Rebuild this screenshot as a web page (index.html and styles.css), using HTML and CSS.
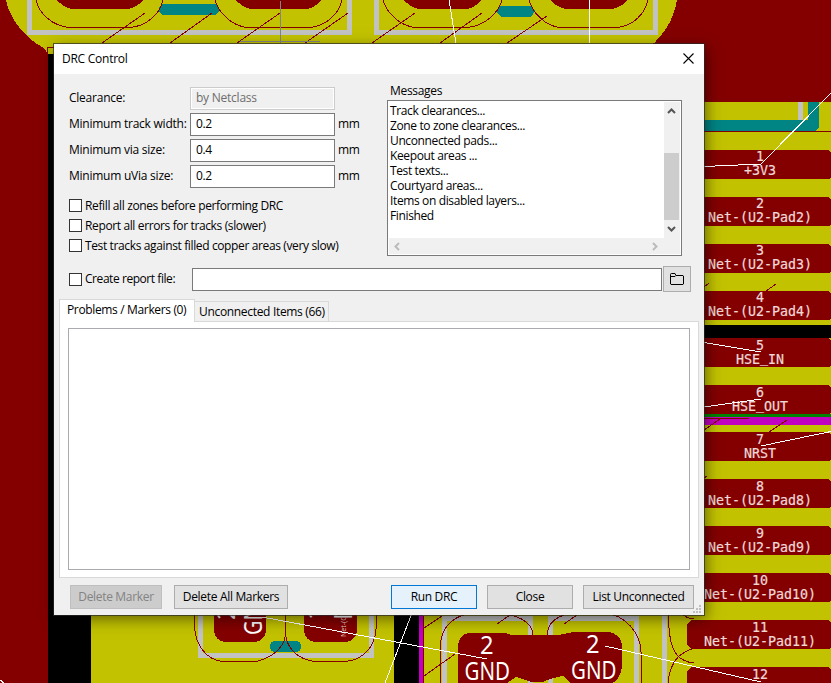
FILE: index.html
```html
<!DOCTYPE html>
<html lang="en">
<head>
<meta charset="utf-8">
<title>DRC Control</title>
<link rel="stylesheet" href="styles.css">
</head>
<body>
<svg class="board" width="831" height="683" viewBox="0 0 831 683" shape-rendering="crispEdges" aria-hidden="true">
  <rect class="cu" width="831" height="683"/>
  <path class="mask" d="M6 0C10 20 26 39 44 48L48 54H640C662 40 674 20 677 0Z"/>
  <path class="silk" d="M29.500 0V32.500H349.500V0M376.500 0V32.500H655.500V0"/>
  <path class="cu" d="M57 0Q63 7 71 9H128Q138 7 143 0ZM236 0Q242 7 250 9H307Q316 7 321 0ZM404 0Q410 7 418 9H467Q476 7 481 0ZM550 0Q557 7 565 9H612Q622 7 628 0Z"/>
  <path class="teal" d="M162 4H216L219 8V11L216 15H162L159 11V8ZM500 6H532L535 11L531 17H501L497 13V9Z"/>
  <path class="trace" d="M36 0C39 14 53 26 69 27.500H130C147 26 160 14 163 0M215 0C219 14 233 26 247 27.500H310C326 26 339 14 342 0M383 0C387 14 401 26 415 27.500H467C484 26 498 14 502 0M529 0C533 14 546 26 560 27.500H617C633 26 645 14 648 0M145 13L102 43M212 13L170 43M280 13L237 43M348 13L305 43M415 13L372 43M482 13L440 43M547 16L507 43M47.500 54V47.500H54"/>
  <path class="cross" d="M280.500 1V43M240 41.500H320"/>
  <path class="rat" d="M449 0L456 43M589.500 0V43"/>

  <rect class="void" x="48" y="54" width="8" height="629"/>
  <rect class="void" x="48" y="610" width="43" height="73"/>
  <rect class="mask" x="91" y="610" width="303" height="73"/>
  <rect class="void" x="394" y="610" width="25" height="73"/>
  <rect class="edge" x="419" y="610" width="4" height="73"/>
  <rect class="mask" x="423" y="610" width="408" height="73"/>
  <path class="silk" d="M200.500 610V655.500H371.500V610M444.500 683V618.500H530.500V683M550.500 683V618.500H636.500V683M664.500 610V683"/>
  <path class="cu" d="M214 610V632Q216 640 224 642H256Q264 640 266 632V610ZM304 610V632Q306 640 314 642H347Q355 640 357 632V610Z"/>
  <rect class="teal" x="270" y="641" width="31" height="11" rx="5"/>
  <path class="trace" d="M194.500 610V625C195 646 207 660 223 661.500H256C272 658 285 647 285.500 634V610M285.500 634C287 650 300 660 315 661.500H345C364 660 375 646 376 629V610"/>
  <g class="bigtext">
    <text transform="translate(262 635) rotate(-90) scale(.8 1)">GND</text>
    <text transform="translate(235 620) rotate(-90)">2</text>
    <text transform="translate(325 620) rotate(-90)">1</text>
    <text transform="translate(352 620) rotate(-90)">N</text>
    <text class="tiny" transform="translate(346 637) rotate(-90)">Net-(C12)</text>
  </g>
  <path class="cu" d="M458 683V645Q460 634 469 633H506L511 635H558L573 632H609Q620 634 622 644V667Q620 680 612 683H570L563 676Q551 678 543 682H531L516 677L507 683Z"/>
  <path class="trace" d="M423 616V683M424 628L442 616M424 676L455 654M497 624L510 615M564 624L577 615M440 683V650C440 630 450 617 470 613.500H500C522 615 533 625 533 635M547 635C548 622 557 616 570 613.500H605C624 614 641 633 641 652V683M668 613C669 632 670 647 677 655Q683 662 694 663M668 683C669 670 674 661 679 656Q687 650 695 648M681 613Q687 619 694 619"/>
  <g class="bigtext">
    <text transform="translate(480 654) scale(.95 1)">2</text><text transform="translate(464.500 680) scale(.82 1)">GND</text>
    <text transform="translate(586 653) scale(.95 1)">2</text><text transform="translate(571 679) scale(.82 1)">GND</text>
  </g>

  <rect class="mask" x="704" y="102" width="127" height="513"/>
  <rect class="silkfill" x="798" y="102" width="5" height="18"/>
  <path class="teal" d="M704 120H808V102H819V127L815 131H704Z"/>
  <rect class="cu" x="704" y="131" width="127" height="1"/>
  <rect class="void" x="704" y="325" width="127" height="13"/>
  <path class="cu" d="M704 150H828L831 152V177L829 179H704ZM704 197H828L831 199V224L829 226H704ZM704 244H828L831 246V271L829 273H704ZM704 291H828L831 293V318L829 320H704ZM704 338H828L831 340V365L829 367H704ZM704 385H828L831 387V412L829 414H704ZM704 432H828L831 434V459L829 461H704ZM704 479H828L831 481V506L829 508H704ZM704 526H828L831 528V553L829 555H704ZM704 573H828L831 575V600L829 602H704ZM691 620H828L831 622V647L829 649H691L687 645V624ZM691 667H828L831 669V683H687V671Z"/>
  <rect class="green" x="704" y="414" width="127" height="3"/>
  <rect class="edge" x="704" y="417" width="127" height="8"/>
  <path class="trace" d="M704 418.500H749M704 430L720 419M769 432L787 420M766 291L776 284M704 287L709 283M704 478L707 476"/>
  <g class="padtext">
    <text x="760" y="161">1</text><text x="760" y="175">+3V3</text>
    <text x="760" y="208">2</text><text x="760" y="222">Net-(U2-Pad2)</text>
    <text x="760" y="255">3</text><text x="760" y="269">Net-(U2-Pad3)</text>
    <text x="760" y="302">4</text><text x="760" y="316">Net-(U2-Pad4)</text>
    <text x="760" y="349.500">5</text><text x="760" y="363.500">HSE<tspan dy="-1.500">_</tspan><tspan dy="1.500">IN</tspan></text>
    <text x="760" y="396.500">6</text><text x="760" y="410.500">HSE<tspan dy="-1.500">_</tspan><tspan dy="1.500">OUT</tspan></text>
    <text x="760" y="443.500">7</text><text x="760" y="457.500">NRST</text>
    <text x="760" y="490.500">8</text><text x="760" y="504.500">Net-(U2-Pad8)</text>
    <text x="760" y="537.500">9</text><text x="760" y="551.500">Net-(U2-Pad9)</text>
    <text x="760" y="584.500">10</text><text x="760" y="598.500">Net-(U2-Pad10)</text>
    <text x="760" y="631.500">11</text><text x="760" y="645.500">Net-(U2-Pad11)</text>
    <text x="760" y="678.500">12</text>
  </g>
  <path class="rat" d="M704 166.500L761 164L831 93M704 342.500L761 352M704 407L761 399M761 446L831 431.500M262 617L487 659M412 613L385 683M605 646L761 682M0 680L4 683"/>
</svg>

<main class="dialog">
  <header class="titlebar">
    <span class="title">DRC Control</span>
    <svg class="close" width="11" height="11" viewBox="0 0 11 11"><path d="M.5.5l10 10M10.500.5l-10 10"/></svg>
  </header>
  <section class="top">
    <div class="options">
      <div class="field"><label>Clearance:</label><span class="input disabled">by Netclass</span></div>
      <div class="field"><label>Minimum track width:</label><span class="input">0.2</span><span>mm</span></div>
      <div class="field"><label>Minimum via size:</label><span class="input">0.4</span><span>mm</span></div>
      <div class="field"><label>Minimum uVia size:</label><span class="input">0.2</span><span>mm</span></div>
      <div class="checks">
        <label class="check"><i class="box"></i><span>Refill all zones before performing DRC</span></label>
        <label class="check"><i class="box"></i><span>Report all errors for tracks (slower)</span></label>
        <label class="check"><i class="box"></i><span>Test tracks against filled copper areas (very slow)</span></label>
      </div>
    </div>
    <div class="messages">
      <div class="caption">Messages</div>
      <div class="log">
        <div class="lines">
          <div>Track clearances...</div><div>Zone to zone clearances...</div><div>Unconnected pads...</div><div>Keepout areas ...</div><div>Test texts...</div><div>Courtyard areas...</div><div>Items on disabled layers...</div><div>Finished</div>
        </div>
        <div class="vbar">
          <svg width="9" height="6" viewBox="0 0 9 6"><path d="M1 5L4.500 1.500L8 5"/></svg>
          <i class="thumb"></i>
          <svg width="9" height="6" viewBox="0 0 9 6"><path d="M1 1L4.500 4.500L8 1"/></svg>
        </div>
        <div class="hbar">
          <svg width="6" height="9" viewBox="0 0 6 9"><path d="M5 1L1.500 4.500L5 8"/></svg>
          <svg width="6" height="9" viewBox="0 0 6 9"><path d="M1 1L4.500 4.500L1 8"/></svg>
        </div>
      </div>
    </div>
  </section>
  <section class="report">
    <label class="check"><i class="box"></i><span>Create report file:</span></label>
    <span class="path"></span>
    <span class="browse"><svg width="14" height="12" viewBox="0 0 14 12"><path d="M.5 11V1.500Q.5.5 1.500.5H5L6 2.500H13L13.500 3V11L13 11.500H1ZM1 3.500H5L6 2.500"/></svg></span>
  </section>
  <nav class="tabs"><span class="tab active">Problems / Markers (0)</span><span class="tab">Unconnected Items (66)</span></nav>
  <section class="panel"><div class="list"></div></section>
  <footer class="buttons">
    <span class="btn off">Delete Marker</span>
    <span class="btn all">Delete All Markers</span>
    <span class="btn run">Run DRC</span>
    <span class="btn cls">Close</span>
    <span class="btn unc">List Unconnected</span>
  </footer>
  <svg class="grip" width="8" height="8" viewBox="0 0 8 8"><path d="M6 0h2v2H6zM3 3h2v2H3zM6 3h2v2H6zM0 6h2v2H0zM3 6h2v2H3zM6 6h2v2H6z"/></svg>
</main>
</body>
</html>
```
FILE: styles.css
```css
* { box-sizing: border-box; }
body {
  margin: 0;
  width: 831px;
  height: 683px;
  overflow: hidden;
  position: relative;
  background: #840000;
  font: 12px/16px "Open Sans", "Noto Sans", sans-serif;
  letter-spacing: -0.32px;
  color: #000;
}

/* board canvas */
.board { display: block; }
.cu { fill: #840000; }
.mask { fill: #c2c200; }
.teal { fill: #008484; }
.void { fill: #000; }
.edge { fill: #c200c2; }
.green { fill: #008400; }
.silkfill { fill: #c2c2c2; }
.silk { fill: none; stroke: #c2c2c2; stroke-width: 5; }
.trace { fill: none; stroke: #840000; stroke-width: 1; }
.cross { fill: none; stroke: #848484; }
.rat { fill: none; stroke: #fff; }
.padtext {
  fill: #eed8d8;
  stroke: #eed8d8;
  stroke-width: .2;
  font: 13.3px "DejaVu Sans Mono", monospace;
  letter-spacing: 0;
  text-anchor: middle;
}
.bigtext { fill: #fff; font: 25px "Noto Sans", sans-serif; letter-spacing: 0; }
.tiny { font-size: 7px; fill: #e8c8c8; }

/* dialog */
.dialog {
  position: absolute;
  left: 54px;
  top: 44px;
  width: 650px;
  height: 571px;
  background: #f0f0f0;
  box-shadow: 0 0 0 1px rgba(40, 40, 40, .7), 2px 4px 14px rgba(0, 0, 0, .5);
  display: flex;
  flex-direction: column;
}
.titlebar {
  height: 30px;
  background: #fff;
  display: flex;
  align-items: center;
  justify-content: space-between;
  padding: 0 10px 0 8px;
}
.title { letter-spacing: -0.25px; }
.close { margin-bottom: 2px; }
.close path { fill: none; stroke: #000; stroke-width: 1.1; }
.top { display: flex; height: 185px; padding: 0 22px 0 15px; justify-content: space-between; }
.options { padding-top: 13px; }
.field { display: flex; height: 26px; align-items: flex-start; }
.field label { width: 121px; padding-top: 3px; white-space: nowrap; letter-spacing: -0.24px; }
.field > span:last-child:not(.input) { padding: 3px 0 0 3px; }
.input {
  width: 145px;
  height: 23px;
  border: 1px solid #7a7a7a;
  background: #fff;
  padding: 2px 5px;
}
.input.disabled { border-color: #ccc; background: #f0f0f0; box-shadow: inset 0 0 0 1px #fff; color: #6d6d6d; letter-spacing: -0.24px; }
.checks { padding-top: 5px; letter-spacing: -0.37px; }
.check { display: flex; align-items: center; height: 20px; gap: 3px; white-space: nowrap; }
.box { width: 13px; height: 13px; margin-bottom: 1px; border: 1px solid #333; background: #fff; }
.messages { width: 295px; padding-top: 9px; }
.caption { height: 17px; padding-left: 3px; }
.log {
  height: 156px;
  border: 1px solid #7a7a7a;
  background: #fff;
  padding: 1px;
  display: grid;
  grid-template-columns: 275px 16px;
  grid-template-rows: 136px 16px;
}
.lines { padding: 1px 0 0 1px; line-height: 15px; letter-spacing: -0.37px; }
.vbar { background: #f0f0f0; display: flex; flex-direction: column; align-items: center; padding: 6px 1px 0 0; }
.thumb { width: 15px; height: 67px; margin: 39px 0 6px; background: #cdcdcd; }
.vbar path { fill: none; stroke: #555; stroke-width: 2; }
.hbar { grid-column: 1 / 3; background: #f0f0f0; display: flex; align-items: center; justify-content: space-between; padding: 0 22px 0 5px; }
.hbar path { fill: none; stroke: #bbb; stroke-width: 2; }
.report { display: flex; align-items: flex-start; height: 40px; padding: 7px 12px 0 15px; }
.report .check { width: 123px; height: 26px; letter-spacing: -0.44px; }
.report .box { margin-bottom: 0; }
.path { width: 470px; height: 23px; margin-top: 2px; border: 1px solid #7a7a7a; background: #fff; }
.browse { width: 28px; height: 26px; margin-left: 1px; border: 1px solid #adadad; background: #e1e1e1; display: flex; align-items: center; justify-content: center; }
.browse path { fill: none; stroke: #000; }
.tabs { display: flex; align-items: flex-end; height: 22px; padding-left: 5px; }
.tab { height: 20px; width: 134px; border: 1px solid #d9d9d9; border-bottom: 0; border-left: 0; padding: 2px 4px; white-space: nowrap; }
.tab.active { height: 23px; width: 136px; border-left: 1px solid #d9d9d9; background: #fff; padding: 2px 7px; margin-bottom: -1px; position: relative; letter-spacing: -0.35px; }
.panel { height: 257px; margin: 0 5px; border: 1px solid #d9d9d9; background: #fff; padding: 6px 8px; }
.list { height: 242px; border: 1px solid #aaaab0; }
.buttons { display: flex; padding: 7px 10px 0 16px; }
.btn { height: 24px; border: 1px solid #adadad; background: #e1e1e1; text-align: center; padding-top: 3px; white-space: nowrap; }
.off { width: 92px; background: #ccc; border-color: #bfbfbf; color: #838383; }
.all { width: 114px; margin-left: 12px; }
.run { width: 86px; margin-left: 103px; border-color: #0078d7; background: #e5f1fb; }
.cls { width: 86px; margin-left: 10px; }
.unc { width: 111px; margin-left: 10px; }
.grip { position: absolute; right: 3px; bottom: 2px; fill: #bfbfbf; }
```
